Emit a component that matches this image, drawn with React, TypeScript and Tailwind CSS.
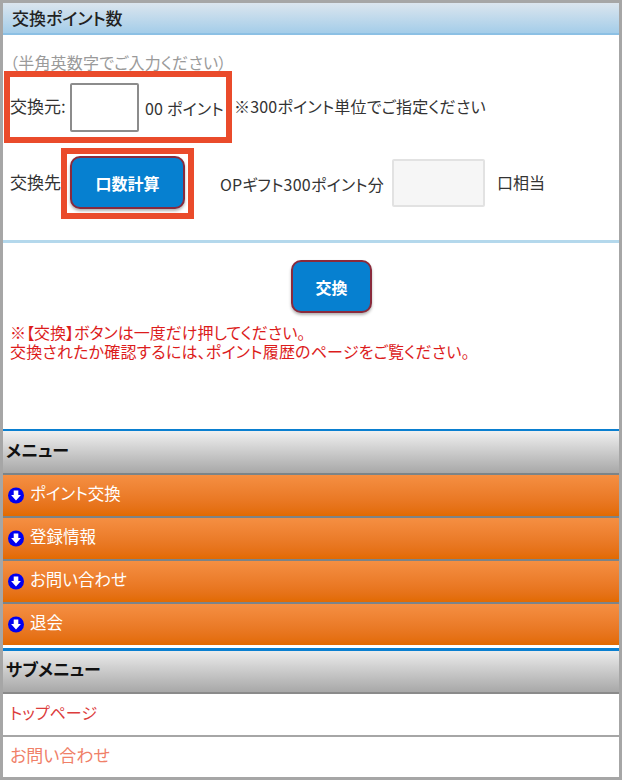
const menuItems = ["ポイント交換", "登録情報", "お問い合わせ", "退会"];

function DownIcon() {
  return (
    <svg width="16" height="17" viewBox="0 0 16 17" className="shrink-0">
      <circle cx="8" cy="8.5" r="8" fill="#0000f0" />
      <path d="M5.7 3.6h4.6v4.3h2.6L8 13.4 3.1 7.9h2.6z" fill="#fff" />
    </svg>
  );
}

function BlueButton({ label, className }: { label: string; className: string }) {
  return (
    <button
      className={`flex items-center justify-center rounded-[10px] border-2 border-[#8a2a3c] bg-[#0680d0] text-[16px] font-bold text-white shadow-[0_2px_3px_rgba(0,0,0,0.3)] ${className}`}
    >
      {label}
    </button>
  );
}

export default function App() {
  return (
    <div className="relative flex h-[780px] w-[622px] flex-col overflow-hidden border-[3px] border-[#a6a6a6] bg-white font-['Noto_Sans_CJK_JP','Liberation_Sans',sans-serif] text-[16px] text-[#333] [font-feature-settings:'palt']">
      <div className="flex h-[32px] shrink-0 items-center border-b-2 border-[#8cc0e4] bg-gradient-to-b from-[#dbe5ee] to-[#a4cde9] pl-[9px] text-[17px] font-medium text-[#222]">
        交換ポイント数
      </div>

      <div className="h-[208px] shrink-0 border-b-[3px] border-[#b4d8ec] pl-[7px]">
        <div className="pt-[15px] text-[16px] leading-[24px] tracking-[0.2px] text-[#9a9a9a]">（半角英数字でご入力ください）</div>
        <div className="mt-[9px] flex h-[49px] items-center">
          <span className="mb-[3px] w-[59px] shrink-0 text-[17px]">交換元:</span>
          <input className="ml-[1px] h-[49px] w-[69px] shrink-0 rounded-[2px] border-2 border-[#8c8c8c] bg-white" />
          <span className="ml-[6px] w-[85px] shrink-0 text-[16px] tracking-[0.2px]">00 ポイント</span>
          <span className="mb-[4px] ml-[4px] text-[16px] tracking-[0.2px]">※300ポイント単位でご指定ください</span>
        </div>
        <div className="mt-[24px] flex h-[53px] items-center">
          <span className="mb-[1px] w-[60px] shrink-0 text-[17px]">交換先</span>
          <BlueButton label="口数計算" className="h-[53px] w-[115px] shrink-0" />
          <span className="ml-[35px] mt-[3px] w-[166px] shrink-0 whitespace-nowrap text-[16px] tracking-[0.2px]">OPギフト300ポイント分</span>
          <input className="ml-[6px] h-[48px] w-[93px] shrink-0 rounded-[2px] border-2 border-[#e2e2e2] bg-[#f6f6f6]" />
          <span className="mb-[1px] ml-[12px] text-[16px]">口相当</span>
        </div>
      </div>

      <div className="flex h-[186px] shrink-0 flex-col">
        <div className="pl-[288px] pt-[17px]">
          <BlueButton label="交換" className="h-[53px] w-[81px]" />
        </div>
        <div className="pl-[7px] pt-[10px] text-[16px] leading-[19px] text-[#dc1c1c]">
          <div>※【交換】ボタンは一度だけ押してください。</div>
          <div className="tracking-[0.2px]">交換されたか確認するには、ポイント履歴のページをご覧ください。</div>
        </div>
      </div>

      <div className="flex h-[46px] shrink-0 items-center border-t-2 border-b-2 border-t-[#0a7fd0] border-b-[#7c8488] bg-gradient-to-b from-[#f0f0f0] to-[#a8a8a8] pb-[5px] pl-[3px] text-[17px] font-bold text-[#111]">
        メニュー
      </div>

      <div className="flex shrink-0 flex-col">
        {menuItems.map((item) => (
          <div
            key={item}
            className="flex h-[43px] items-center gap-[6px] border-b-2 border-[#7c8488] bg-gradient-to-b from-[#f58f42] to-[#e26a00] pl-[5px] text-[16.5px] text-white last:h-[41px] last:border-b-0"
          >
            <DownIcon />
            <span className="mb-[5px]">{item}</span>
          </div>
        ))}
      </div>

      <div className="mt-[3px] flex h-[46px] shrink-0 items-center border-t-[3px] border-b-2 border-t-[#0a7fd0] border-b-[#8a8a8a] bg-gradient-to-b from-[#ececec] to-[#a8a8a8] pb-[6px] pl-[3px] text-[17px] font-bold text-[#111]">
        サブメニュー
      </div>
      <div className="flex h-[43px] shrink-0 items-center border-b-2 border-[#a6a6a6] pb-[5px] pl-[7px] text-[16px] text-[#dc3c3c]">
        トップページ
      </div>
      <div className="flex flex-1 items-center pb-[5px] pl-[7px] text-[17px] text-[#f08068]">お問い合わせ</div>

      {/* annotation boxes drawn on top of the capture */}
      <div className="pointer-events-none absolute left-[1px] top-[68px] h-[72px] w-[228px] border-[6px] border-[#ea4b2b]" />
      <div className="pointer-events-none absolute left-[58px] top-[145px] h-[71px] w-[133px] border-[6px] border-[#ea4b2b]" />
    </div>
  );
}
